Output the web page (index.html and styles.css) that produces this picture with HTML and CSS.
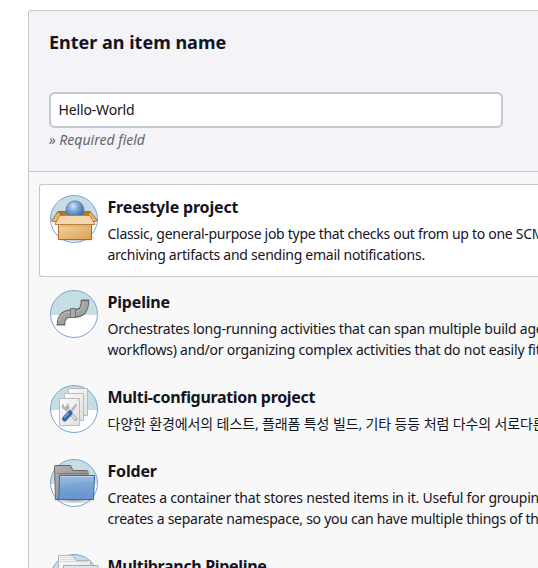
FILE: index.html
```html
<!DOCTYPE html>
<html lang="en">
<head>
<meta charset="utf-8">
<title>New Item</title>
<link rel="stylesheet" href="styles.css">
</head>
<body>
<svg class="defs" width="0" height="0" aria-hidden="true">
  <defs>
    <linearGradient id="sky" x1="0" y1="0" x2="0" y2="1"><stop offset=".52" stop-color="#c7dde4"/><stop offset=".52" stop-color="#fff"/></linearGradient>
    <radialGradient id="ball" cx=".4" cy=".3" r=".65"><stop offset="0" stop-color="#d4e5f6"/><stop offset=".45" stop-color="#7ea7d4"/><stop offset="1" stop-color="#3c6ba8"/></radialGradient>
    <linearGradient id="box" x1="0" y1="0" x2="1" y2="1"><stop offset="0" stop-color="#f3d5a4"/><stop offset="1" stop-color="#dda152"/></linearGradient>
    <linearGradient id="blue" x1="0" y1="0" x2="0" y2="1"><stop offset="0" stop-color="#9abbe0"/><stop offset=".5" stop-color="#7ca7d7"/><stop offset="1" stop-color="#6797cf"/></linearGradient>
    <linearGradient id="gray" x1="0" y1="0" x2="1" y2="1"><stop offset="0" stop-color="#b2b2b2"/><stop offset="1" stop-color="#858585"/></linearGradient>
    <linearGradient id="paper" x1="0" y1="0" x2="1" y2="1"><stop offset="0" stop-color="#fdfdfd"/><stop offset="1" stop-color="#dedede"/></linearGradient>
    <radialGradient id="shade"><stop offset="0" stop-color="#555" stop-opacity=".6"/><stop offset="1" stop-color="#777" stop-opacity="0"/></radialGradient>
  </defs>
</svg>
<main class="panel">
  <header class="name-section">
    <h1 class="heading">Enter an item name</h1>
    <input class="name-input" type="text" value="Hello-World" aria-label="Item name">
    <div class="hint">» Required field</div>
  </header>
  <ul class="items">
    <li class="item selected">
      <svg class="icon" viewBox="0 0 48 48">
        <circle cx="24" cy="24" r="23.5" fill="url(#sky)" stroke="#78a6d8"/>
        <ellipse cx="26" cy="43.500" rx="22" ry="4" fill="url(#shade)"/>
        <path d="M8 16.500H40L41 28H7Z" fill="#b7772d" stroke="#a66a25"/>
        <circle cx="25" cy="14.800" r="9" fill="url(#ball)" stroke="#456f9f" stroke-width=".6"/>
        <path d="M8 16.500L1.500 26 6 27 11 20ZM40 16.500L47.500 25.500 43 27 38 20Z" fill="#e2b77c" stroke="#a66a25"/>
        <path d="M8.500 28H41.500V44.500H8.500Z" fill="url(#box)" stroke="#ad6c22"/>
        <path d="M9.500 20.500L5 29.500H45L40 20.500Z" fill="#f4d7aa" stroke="#bd813d"/>
        <path d="M10 31H40" stroke="#b9803e" opacity=".45"/>
      </svg>
      <div class="text">
        <h2 class="title snug">Freestyle project</h2>
        <p class="desc"><span class="tightest">Classic, general-purpose job type that checks out from up to one SCM</span><br><span class="tighter">archiving artifacts and sending email notifications.</span></p>
      </div>
    </li>
    <li class="item">
      <svg class="icon" viewBox="0 0 48 48">
        <circle cx="24" cy="24" r="23.500" fill="url(#sky)" stroke="#78a6d8"/>
        <path d="M11 35C11 26 15 23.500 23 23.500S35 21 35 10" fill="none" stroke="#606060" stroke-width="8.500"/>
        <path d="M11 34C11 26 15 23.500 23 23.500S35 21 35 11" fill="none" stroke="#a2a2a2" stroke-width="6.500"/>
        <path d="M9 31C10 24 15 22 22 22S33 18 33.500 12" fill="none" stroke="#b4b4b4" stroke-width="1.500"/>
        <path d="M31 10H39.500M6.500 35H15.500M20.500 18.500H25.500V27.500H20.500Z" fill="#aaa" stroke="#707070"/>
      </svg>
      <div class="text">
        <h2 class="title snug">Pipeline</h2>
        <p class="desc"><span class="tight">Orchestrates long-running activities that can span multiple build agents.</span><br><span class="tight">workflows) and/or organizing complex activities that do not easily fit</span></p>
      </div>
    </li>
    <li class="item">
      <svg class="icon" viewBox="0 0 48 48">
        <circle cx="24" cy="24" r="23.500" fill="url(#sky)" stroke="#78a6d8"/>
        <g fill="url(#paper)" stroke="#b9bcbc"><path d="M18.500 3.500H37.500V30.500H18.500Z"/><path d="M14.500 8.500H33.500V35.500H14.500Z"/><path d="M9.500 13.500H29.500V40.500H9.500Z"/></g>
        <path d="M16 23L25.500 34" stroke="#aaa" stroke-width="3.600" stroke-linecap="round"/><path d="M16 23L25.500 34" stroke="#ddd" stroke-width="2"/>
        <path d="M13 19.500L12.800 22.500 15.500 24.500 18.500 22.500 17.500 19" fill="none" stroke="#b4b4b4" stroke-width="2"/>
        <path d="M26.500 19.500L20 27.500" stroke="#b5b8b8" stroke-width="2.500"/>
        <path d="M20 28L14.500 34" stroke="#3465a4" stroke-width="5" stroke-linecap="round"/><path d="M19 28L14 33" stroke="#83aad7" stroke-width="1.300"/>
      </svg>
      <div class="text">
        <h2 class="title narrow">Multi-configuration project</h2>
        <p class="desc korean" lang="ko">다양한 환경에서의 테스트, 플래폼 특성 빌드, 기타 등등 처럼 다수의 서로다른 환경설정이</p>
      </div>
    </li>
    <li class="item">
      <svg class="icon" viewBox="0 0 48 48">
        <circle cx="24" cy="24" r="23.500" fill="url(#sky)" stroke="#78a6d8"/>
        <ellipse cx="24" cy="41" rx="23" ry="4" fill="url(#shade)"/>
        <path d="M5.500 40.500L4.500 7.500Q4.500 6.500 6 6.500H20.500L23 11.500H36.500Q38 11.500 38 13V40Z" fill="url(#gray)" stroke="#676767"/>
        <path d="M7 14.500H36" stroke="#777"/>
        <path d="M9.500 16.500H44.500L43.500 40.500H7.500Q9 39 9 35Z" fill="url(#blue)" stroke="#3568a7"/>
        <path d="M10.500 17.500H43.500" stroke="#c1d6ed"/><path d="M10 31Q20 23 43 22L42.500 39H9Z" fill="#5689c5" opacity=".18"/>
      </svg>
      <div class="text">
        <h2 class="title snug">Folder</h2>
        <p class="desc"><span class="tight">Creates a container that stores nested items in it. Useful for grouping</span><br><span class="tighter">creates a separate namespace, so you can have multiple things of the same</span></p>
      </div>
    </li>
    <li class="item">
      <svg class="icon" viewBox="0 0 48 48">
        <circle cx="24" cy="24" r="23.500" fill="url(#sky)" stroke="#78a6d8"/>
        <path d="M8.500 35V1.500H23.500L26 6.500H40.500V35Z" fill="url(#paper)" stroke="#b5b5b5"/>
        <path d="M9 3.500H24M9 5.500H24M9 7.500H37" stroke="#bbb" opacity=".5"/>
        <path d="M13.500 11.500H48V35H13.500Z" fill="#dce6ef" stroke="#91afd0"/>
      </svg>
      <div class="text"><h2 class="title narrow">Multibranch Pipeline</h2></div>
    </li>
  </ul>
</main>
</body>
</html>
```
FILE: styles.css
```css
* { box-sizing: border-box; }
html { overflow: hidden; }
body { margin: 0; height: 568px; overflow: hidden; background: #fff; color: #14141f; font: 14px/21px "Noto Sans", "Noto Sans CJK KR", sans-serif; }
.defs { position: absolute; }
.panel { height: 558px; margin: 10px 0 0 28px; border: 1px solid #bfcbd0; border-width: 1px 0 0 1px; border-radius: 3px 0 0 0; background: #f8f8f8; overflow: hidden; }
.name-section { height: 161px; padding: 19px 20px 0; border-bottom: 1px solid #bfcbd0; background: #f3f3f8; }
.heading { margin: 0 0 38px; height: 24px; font-size: 18px; line-height: 24px; font-weight: 700; white-space: nowrap; }
.name-input { display: block; width: 454px; height: 36px; padding: 0 8px 2px 7.5px; border: 2px solid #bfcbd0; border-radius: 6px; background: #fff; color: #14141f; font: inherit; letter-spacing: -.15px; outline: none; }
.hint { margin-top: 1px; color: #666; font-style: italic; line-height: 22px; }
.items { list-style: none; margin: 0; padding: 12px 0 0 10px; }
.item { display: flex; gap: 10px; margin-bottom: 2px; padding: 10px 0 10px 10px; border: 1px solid transparent; border-right: 0; border-radius: 3px 0 0 3px; }
.item.selected { background: #fff; border-color: #bfcbd0; }
.icon { flex: none; width: 48px; height: 48px; overflow: visible; }
.text { margin-left: -.5px; white-space: nowrap; }
.title { margin: 0 0 2px; height: 26px; font-size: 16px; line-height: 24px; font-weight: 700; }
.desc { margin: 0 0 1px; }
.snug { letter-spacing: -.18px; }
.narrow { letter-spacing: -.33px; }
.tight { letter-spacing: -.21px; }
.tighter { letter-spacing: -.26px; }
.tightest { letter-spacing: -.29px; }
.korean { letter-spacing: -.12px; }
```
